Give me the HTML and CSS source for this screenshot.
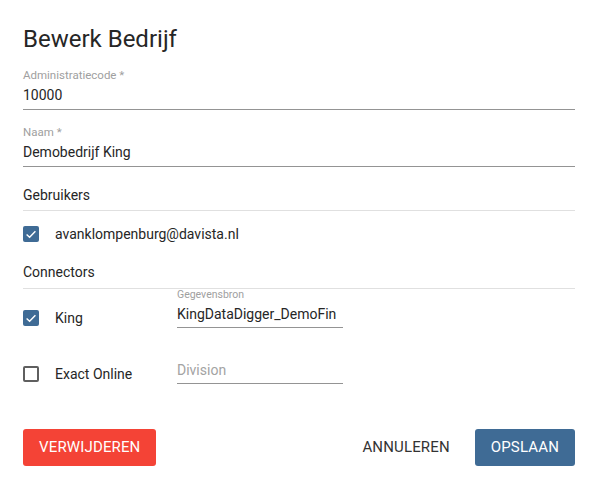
FILE: index.html
```html
<!DOCTYPE html>
<html lang="nl">
<head>
<meta charset="utf-8">
<title>Bewerk Bedrijf</title>
<link rel="stylesheet" href="styles.css">
</head>
<body>
<div class="dialog">
  <h1 class="title">Bewerk Bedrijf</h1>

  <div class="field field-first">
    <div class="lbl">Administratiecode *</div>
    <div class="input">10000</div>
  </div>

  <div class="field field-next">
    <div class="lbl">Naam *</div>
    <div class="input">Demobedrijf King</div>
  </div>

  <div class="section section-users">Gebruikers</div>

  <div class="check-row user-row">
    <span class="cb checked"><svg viewBox="0 0 16 16" width="16" height="16"><polyline points="3.6,8.4 6.6,11.2 12.4,5.2" fill="none" stroke="#fff" stroke-width="1.4"/></svg></span>
    <span class="cb-text">avanklompenburg@davista.nl</span>
  </div>

  <div class="section section-conn">Connectors</div>

  <div class="connector">
    <div class="check-row conn-left">
      <span class="cb checked"><svg viewBox="0 0 16 16" width="16" height="16"><polyline points="3.6,8.4 6.6,11.2 12.4,5.2" fill="none" stroke="#fff" stroke-width="1.4"/></svg></span>
      <span class="cb-text">King</span>
    </div>
    <div class="conn-field">
      <div class="lbl-small">Gegevensbron</div>
      <div class="input input-small">KingDataDigger_DemoFin</div>
    </div>
  </div>

  <div class="connector connector-next">
    <div class="check-row conn-left">
      <span class="cb"></span>
      <span class="cb-text">Exact Online</span>
    </div>
    <div class="conn-field">
      <div class="lbl-small"></div>
      <div class="input input-small placeholder">Division</div>
    </div>
  </div>

  <div class="actions">
    <button class="btn btn-danger">VERWIJDEREN</button>
    <div class="actions-right">
      <button class="btn btn-text">ANNULEREN</button>
      <button class="btn btn-primary">OPSLAAN</button>
    </div>
  </div>
</div>
</body>
</html>
```
FILE: styles.css
```css
html, body {
  margin: 0;
  padding: 0;
  background: #ffffff;
}
body {
  font-family: Roboto, "Liberation Sans", Arial, sans-serif;
  color: #262626;
  font-size: 14px;
}
.dialog {
  padding: 23px 23px 0 23px;
}
.title {
  margin: 0;
  font-size: 24px;
  line-height: 32px;
  font-weight: 400;
  color: #262626;
}
.field-first {
  margin-top: 13px;
}
.field-next {
  margin-top: 15px;
}
.lbl {
  font-size: 11.5px;
  line-height: 14px;
  color: #a0a0a0;
}
.input {
  margin-top: 3px;
  font-size: 14px;
  line-height: 20px;
  padding-bottom: 4px;
  border-bottom: 1px solid #949494;
  white-space: nowrap;
  overflow: hidden;
}
.section {
  font-size: 14px;
  line-height: 20px;
  border-bottom: 1px solid #e0e0e0;
}
.section-users {
  margin-top: 18px;
  padding-bottom: 5px;
}
.section-conn {
  margin-top: 20px;
  padding-bottom: 6px;
}
.check-row {
  display: flex;
  align-items: center;
  height: 16px;
}
.user-row {
  margin-top: 15px;
}
.cb {
  box-sizing: border-box;
  width: 16px;
  height: 16px;
  flex: none;
  border: 2px solid #5f5f5f;
  border-radius: 2px;
  display: block;
}
.cb.checked {
  border: none;
  background: #3f6b95;
}
.cb svg {
  display: block;
}
.cb-text {
  margin-left: 16px;
  font-size: 14px;
  line-height: 16px;
  color: #262626;
}
.connector {
  display: flex;
  align-items: flex-end;
}
.connector-next {
  margin-top: 17px;
}
.conn-left {
  width: 154px;
  margin-bottom: 2px;
}
.conn-field {
  width: 166px;
}
.lbl-small {
  font-size: 10.5px;
  line-height: 11px;
  height: 11px;
  color: #a0a0a0;
}
.input-small {
  margin-top: 4px;
  padding-bottom: 3px;
}
.placeholder {
  color: #a3a3a3;
}
.actions {
  margin-top: 45px;
  display: flex;
  justify-content: space-between;
  align-items: center;
}
.actions-right {
  display: flex;
  align-items: center;
  gap: 9px;
}
.btn {
  font-family: Roboto, "Liberation Sans", Arial, sans-serif;
  font-size: 15px;
  line-height: 37px;
  height: 37px;
  padding: 0 16px;
  border: none;
  border-radius: 3px;
  background: transparent;
  color: #262626;
  font-weight: 400;
  letter-spacing: 0.15px;
}
.btn-danger {
  background: #f44336;
  color: #ffffff;
}
.btn-primary {
  background: #3f6b95;
  color: #ffffff;
}
.btn-text {
  color: #333333;
}
```
